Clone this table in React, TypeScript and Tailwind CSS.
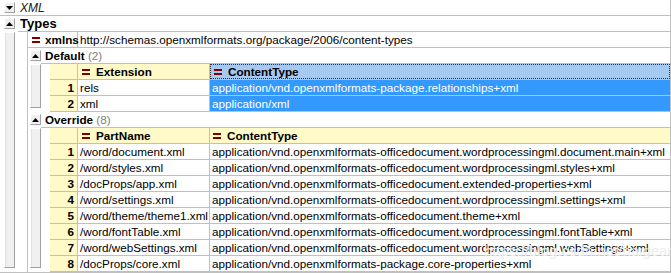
import React from "react";

const LINE = "border-[#c0c0c0]";

function Eq() {
  return <span className="inline-block w-[8px] h-[6px] border-t-2 border-b-2 border-[#800000] shrink-0" />;
}

function Tri({ down }: { down?: boolean }) {
  return (
    <span className="inline-flex w-[11px] h-[11px] items-center justify-center bg-[#f0f0f0] border border-l-white border-t-white border-r-[#a0a0a0] border-b-[#a0a0a0] shrink-0">
      <svg width="7" height="4" viewBox="0 0 7 4">
        {down ? <polygon points="0,0 7,0 3.5,4" fill="#000" /> : <polygon points="0,4 7,4 3.5,0" fill="#000" />}
      </svg>
    </span>
  );
}

function Bar() {
  return <div className="flex-1 w-[11px] mb-[4px] bg-[#f0f0f0] border border-l-white border-t-white border-r-[#a0a0a0] border-b-[#a0a0a0] shadow-[inset_1px_0_0_#e0e0e0]" />;
}

type Row = [string, string];

function Table({ col1, rows, selected }: { col1: string; rows: Row[]; selected?: boolean }) {
  return (
    <div>
      <div className={`flex h-[16px] border-b ${LINE}`}>
        <div className={`w-[28px] shrink-0 bg-[#fffac8] border-r ${LINE}`} />
        <div className={`w-[132px] shrink-0 bg-[#fffac8] border-r ${LINE} flex items-center pl-[4px] gap-[6px] font-bold`}>
          <Eq />
          <span>{col1}</span>
        </div>
        <div
          className={`flex-1 min-w-0 flex items-center pl-[3px] gap-[6px] font-bold ${
            selected ? "bg-[#a6c9f1] border border-dotted border-[#303030]" : "bg-[#fffac8]"
          }`}
        >
          <Eq />
          <span>ContentType</span>
        </div>
      </div>
      {rows.map((r, i) => (
        <div key={i} className={`flex h-[16px] border-b ${LINE}`}>
          <div className={`w-[28px] shrink-0 bg-[#fffac8] border-r ${LINE} text-right pr-[3px] font-bold leading-[15px]`}>{i + 1}</div>
          <div className={`w-[132px] shrink-0 border-r ${LINE} pl-[2px] leading-[15px] whitespace-nowrap overflow-hidden`}>{r[0]}</div>
          <div className={`flex-1 min-w-0 pl-[2px] leading-[15px] whitespace-nowrap overflow-hidden ${selected ? "bg-[#3399ff] text-white" : ""}`}>
            {r[1]}
          </div>
        </div>
      ))}
    </div>
  );
}

function Section({ name, count, col1, rows, selected }: { name: string; count: number; col1: string; rows: Row[]; selected?: boolean }) {
  return (
    <div className="flex">
      <div className="w-[13px] shrink-0 flex flex-col items-start pl-[2px] pt-[2px] gap-[3px]">
        <Tri />
        <Bar />
      </div>
      <div className="flex-1 min-w-0">
        <div className={`h-[16px] pl-[4px] leading-[15px] border-b ${LINE} whitespace-nowrap`}>
          <span className="font-bold">{name}</span> <span className="text-[#808080]">({count})</span>
        </div>
        <div className="ml-[9px]">
          <Table col1={col1} rows={rows} selected={selected} />
        </div>
      </div>
    </div>
  );
}

export default function App() {
  const def: Row[] = [
    ["rels", "application/vnd.openxmlformats-package.relationships+xml"],
    ["xml", "application/xml"],
  ];
  const ovr: Row[] = [
    ["/word/document.xml", "application/vnd.openxmlformats-officedocument.wordprocessingml.document.main+xml"],
    ["/word/styles.xml", "application/vnd.openxmlformats-officedocument.wordprocessingml.styles+xml"],
    ["/docProps/app.xml", "application/vnd.openxmlformats-officedocument.extended-properties+xml"],
    ["/word/settings.xml", "application/vnd.openxmlformats-officedocument.wordprocessingml.settings+xml"],
    ["/word/theme/theme1.xml", "application/vnd.openxmlformats-officedocument.theme+xml"],
    ["/word/fontTable.xml", "application/vnd.openxmlformats-officedocument.wordprocessingml.fontTable+xml"],
    ["/word/webSettings.xml", "application/vnd.openxmlformats-officedocument.wordprocessingml.webSettings+xml"],
    ["/docProps/core.xml", "application/vnd.openxmlformats-package.core-properties+xml"],
  ];
  return (
    <div className="relative w-[671px] h-[273px] bg-white overflow-hidden font-['Liberation_Sans',sans-serif] text-[11.7px] text-black">
      <div className={`w-[671px] border-r ${LINE}`}>
        <div className={`flex items-center h-[16px] border-b ${LINE} pl-[4px] gap-[5px]`}>
          <Tri down />
          <span className="italic text-[#202020] text-[12px]">XML</span>
        </div>
        <div className={`flex border-b ${LINE}`}>
          <div className="w-[18px] shrink-0 flex flex-col items-start pl-[4px] pt-[2px] gap-[3px]">
            <Tri />
            <Bar />
          </div>
          <div className="flex-1 min-w-0">
            <div className={`h-[16px] pl-[2px] leading-[15px] border-b ${LINE} font-bold text-[13px]`}>Types</div>
            <div className={`ml-[9px] border-l ${LINE}`}>
              <div className={`flex h-[16px] border-b ${LINE}`}>
                <div className={`w-[50px] shrink-0 border-r ${LINE} flex items-center pl-[4px] gap-[5px]`}>
                  <Eq />
                  <span className="font-bold">xmlns</span>
                </div>
                <div className="pl-[2px] leading-[15px] whitespace-nowrap">http://schemas.openxmlformats.org/package/2006/content-types</div>
              </div>
              <Section name="Default" count={2} col1="Extension" rows={def} selected />
              <Section name="Override" count={8} col1="PartName" rows={ovr} />
            </div>
          </div>
        </div>
      </div>
      <div className="absolute left-[484px] top-[240px] text-[15px] text-[#ededed] font-['Liberation_Sans',sans-serif] pointer-events-none">
        https://blog.csdn.net/haigear
      </div>
    </div>
  );
}
